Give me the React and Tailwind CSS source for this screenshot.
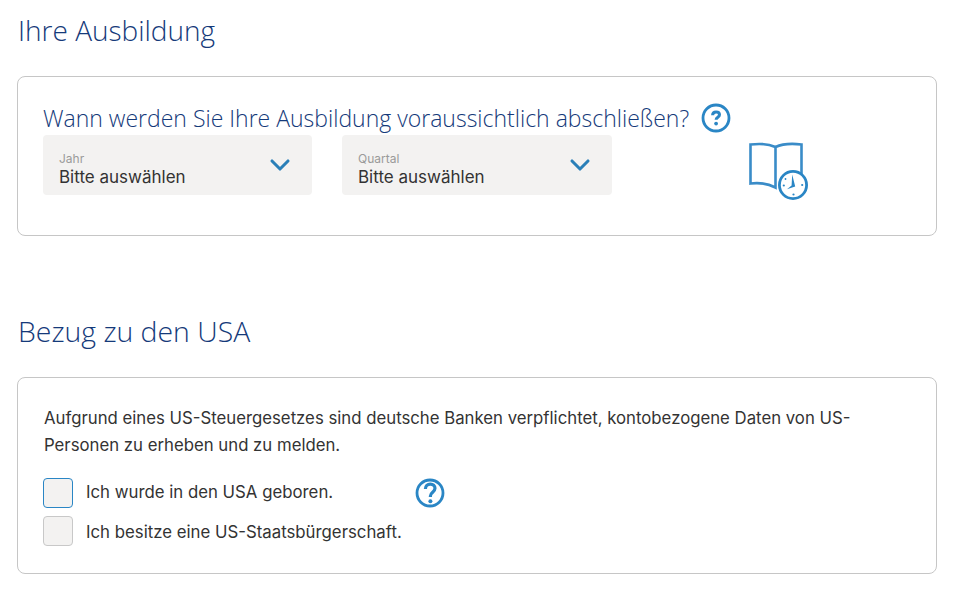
import React from "react";
import { ChevronDown } from "lucide-react";

const HelpIcon = ({ className, large }) => (
  <svg viewBox="0 0 30 30" className={className} fill="none">
    <circle cx="15" cy="15" r="13" stroke="#2a86c5" strokeWidth="2.8" />
    {large ? (
      <>
        <path d="M10.4 11c0-3 2.1-4.9 4.9-4.9s4.7 1.7 4.7 4.2c0 3.9-4.6 3.8-4.6 7.7v1" stroke="#2a86c5" strokeWidth="3.2" />
        <circle cx="15.4" cy="23.2" r="2" fill="#2a86c5" />
      </>
    ) : (
      <>
        <path d="M11.6 12.2c0-2 1.5-3.2 3.5-3.2s3.4 1.1 3.4 2.8c0 2.5-3.4 2.4-3.4 5" stroke="#2a86c5" strokeWidth="3" />
        <circle cx="15.1" cy="20.6" r="1.9" fill="#2a86c5" />
      </>
    )}
  </svg>
);

const BookClockIcon = () => (
  <svg viewBox="0 0 60 60" className="w-[60px] h-[60px]" fill="none">
    <path d="M26.5 5C20 2 10 1.5 1.5 2.5V41.5C10 40.5 19 41.5 26.5 45.5V5ZM26.5 5C33 2 44 1.5 52.5 2.5V32" stroke="#3a8cc8" strokeWidth="2.6" />
    <circle cx="44" cy="43" r="13.6" fill="#fff" stroke="#2a86c5" strokeWidth="2.8" />
    <path d="M43.2 32.5L46.2 44.6 38 47.2 42.6 43.4z" fill="#2a86c5" />
    <circle cx="44.5" cy="52.5" r="1.1" fill="#2a86c5" />
    <circle cx="34.8" cy="43.5" r="1.1" fill="#2a86c5" />
    <circle cx="53.2" cy="43" r="1.1" fill="#2a86c5" />
    <circle cx="36.5" cy="37" r="0.9" fill="#2a86c5" />
  </svg>
);

const Select = ({ label, className }) => (
  <div className={`h-[60px] bg-[#f3f2f1] rounded flex items-center justify-between pl-[16px] pr-[16px] ${className}`}>
    <div className="pt-[9px] font-['Inter',sans-serif]">
      <div className="text-[12px] leading-[14px] text-[#9a9a9a]">{label}</div>
      <div className="text-[17px] leading-[22px] text-[#333]">Bitte auswählen</div>
    </div>
    <ChevronDown className="w-[32px] h-[32px] text-[#2a7fb8]" strokeWidth={2.3} />
  </div>
);

const Check = ({ focused, label, help, labelClass }) => (
  <div className="flex items-center h-[30px]">
    <div className={`w-[30px] h-[30px] rounded bg-[#f3f2f1] border ${focused ? "border-[#2a86c5]" : "border-[#c8c8c8]"}`} />
    <span className={`ml-[13px] w-[329px] text-[16.8px] text-[#333] ${labelClass}`}>{label}</span>
    {help && <HelpIcon large className="w-[30px] h-[30px]" />}
  </div>
);

export default function App() {
  return (
    <div className="w-[955px] h-[601px] overflow-hidden bg-white pl-[17px] pt-[12px] font-['Open_Sans',sans-serif]">
      <h2 className="text-[28px] leading-[36px] font-light text-[#153a7a] pl-[1px]">Ihre Ausbildung</h2>
      <div className="mt-[28px] w-[920px] h-[160px] border border-[#c6c6c6] rounded-lg pl-[25px] pt-[24px]">
        <div className="flex items-center h-[34px]">
          <span className="text-[23px] font-light text-[#153a7a]">Wann werden Sie Ihre Ausbildung voraussichtlich abschließen?</span>
          <HelpIcon className="ml-[12px] w-[30px] h-[30px]" />
        </div>
        <div className="flex">
          <Select label="Jahr" className="w-[269px]" />
          <div className="w-[30px]" />
          <Select label="Quartal" className="w-[270px]" />
          <div className="ml-[137px] mt-[7px]"><BookClockIcon /></div>
        </div>
      </div>
      <h2 className="mt-[77px] text-[28.4px] leading-[36px] font-light text-[#153a7a] pl-[1px]">Bezug zu den USA</h2>
      <div className="mt-[28px] w-[920px] h-[197px] border border-[#c6c6c6] rounded-lg pl-[26px] pt-[27px] font-['Inter',sans-serif]">
        <p className="text-[16.75px] leading-[27px] text-[#333] w-[830px]">
          Aufgrund eines US-Steuergesetzes sind deutsche Banken verpflichtet, kontobezogene Daten von US-Personen zu erheben und zu melden.
        </p>
        <div className="mt-[19px] -ml-[1px] flex flex-col gap-[8px]">
          <Check focused label="Ich wurde in den USA geboren." help />
          <Check label="Ich besitze eine US-Staatsbürgerschaft." labelClass="pt-[3px]" />
        </div>
      </div>
    </div>
  );
}
